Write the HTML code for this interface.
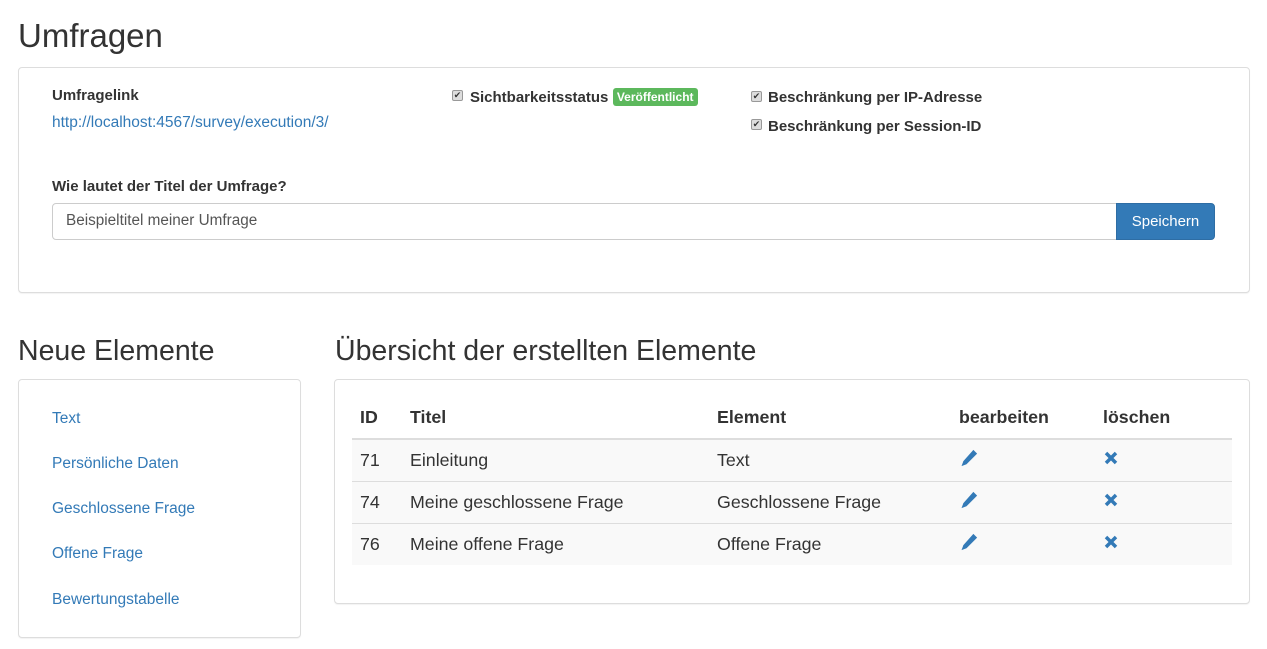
<!DOCTYPE html>
<html><head><meta charset="utf-8"><style>
*{box-sizing:border-box;margin:0;padding:0}
body{width:1267px;height:649px;background:#fff;font-family:"Liberation Sans",Arial,sans-serif;color:#333;position:relative;overflow:hidden}
.a{position:absolute;white-space:nowrap}
h1{position:absolute;font-weight:400;font-size:33px;left:18px;top:17px}
h2{position:absolute;font-weight:400;font-size:28.5px;white-space:nowrap}
.panel{position:absolute;border:1px solid #ddd;border-radius:4px;background:#fff;box-shadow:0 1px 1px rgba(0,0,0,.05)}
b{font-weight:700;font-size:15px}
.link{color:#337ab7;font-size:15.5px}
.cb{position:absolute;width:11px;height:11px;border:1px solid #999;border-radius:2px;background:#ddd;font-size:9px;line-height:9px;text-align:center;color:#333}
.badge{display:inline-block;background:#5cb85c;color:#fff;font-size:12px;font-weight:700;padding:2px 4px;border-radius:3px;vertical-align:1px}
table{position:absolute;left:352px;top:396px;width:880px;border-collapse:collapse;font-size:17.8px}
th{text-align:left;font-weight:700;height:43px;padding-left:8px;border-bottom:2px solid #ddd}
td{height:42px;padding-left:8px;background:#f9f9f9;border-top:1px solid #ddd}
</style></head><body>
<h1>Umfragen</h1>
<div class="panel" style="left:18px;top:67px;width:1232px;height:226px"></div>
<div class="a" style="left:52px;top:87px"><b>Umfragelink</b></div>
<div class="a link" style="left:52px;top:114px">http://localhost:4567/survey/execution/3/</div>
<div class="cb" style="left:452px;top:90px">✔</div>
<div class="a" style="left:470px;top:88px"><b>Sichtbarkeitsstatus</b> <span class="badge">Veröffentlicht</span></div>
<div class="cb" style="left:751px;top:91px">✔</div>
<div class="a" style="left:768px;top:89px"><b>Beschränkung per IP-Adresse</b></div>
<div class="cb" style="left:751px;top:119px">✔</div>
<div class="a" style="left:768px;top:118px"><b>Beschränkung per Session-ID</b></div>
<div class="a" style="left:52px;top:178px"><b>Wie lautet der Titel der Umfrage?</b></div>
<div class="a" style="left:52px;top:203px;width:1065px;height:37px;border:1px solid #ccc;border-radius:4px 0 0 4px;font-size:15.3px;color:#555;padding:8px 13px">Beispieltitel meiner Umfrage</div>
<div class="a" style="left:1116px;top:203px;width:99px;height:37px;background:#337ab7;border:1px solid #2e6da4;border-radius:0 4px 4px 0;color:#fff;font-size:15px;text-align:center;line-height:35px">Speichern</div>

<h2 style="left:18px;top:335px">Neue Elemente</h2>
<div class="panel" style="left:18px;top:379px;width:283px;height:259px"></div>
<div class="a link" style="left:52px;top:410px">Text</div>
<div class="a link" style="left:52px;top:455px">Persönliche Daten</div>
<div class="a link" style="left:52px;top:500px">Geschlossene Frage</div>
<div class="a link" style="left:52px;top:545px">Offene Frage</div>
<div class="a link" style="left:52px;top:591px">Bewertungstabelle</div>

<h2 style="left:335px;top:335px">Übersicht der erstellten Elemente</h2>
<div class="panel" style="left:334px;top:379px;width:916px;height:225px"></div>
<table>
<tr><th style="width:50px">ID</th><th style="width:307px">Titel</th><th style="width:242px">Element</th><th style="width:144px">bearbeiten</th><th>löschen</th></tr>
<tr><td>71</td><td>Einleitung</td><td>Text</td><td><svg width="20" height="20" viewBox="0 0 16 16"><path d="M11.5 1.5l3 3-8.5 8.5-4 1.5 1.5-4z" fill="#337ab7"/></svg></td><td><svg width="16" height="16" viewBox="0 0 16 16"><path d="M3 3l10 10M13 3L3 13" stroke="#337ab7" stroke-width="3.5"/></svg></td></tr>
<tr><td>74</td><td>Meine geschlossene Frage</td><td>Geschlossene Frage</td><td><svg width="20" height="20" viewBox="0 0 16 16"><path d="M11.5 1.5l3 3-8.5 8.5-4 1.5 1.5-4z" fill="#337ab7"/></svg></td><td><svg width="16" height="16" viewBox="0 0 16 16"><path d="M3 3l10 10M13 3L3 13" stroke="#337ab7" stroke-width="3.5"/></svg></td></tr>
<tr><td>76</td><td>Meine offene Frage</td><td>Offene Frage</td><td><svg width="20" height="20" viewBox="0 0 16 16"><path d="M11.5 1.5l3 3-8.5 8.5-4 1.5 1.5-4z" fill="#337ab7"/></svg></td><td><svg width="16" height="16" viewBox="0 0 16 16"><path d="M3 3l10 10M13 3L3 13" stroke="#337ab7" stroke-width="3.5"/></svg></td></tr>
</table>
</body></html>
